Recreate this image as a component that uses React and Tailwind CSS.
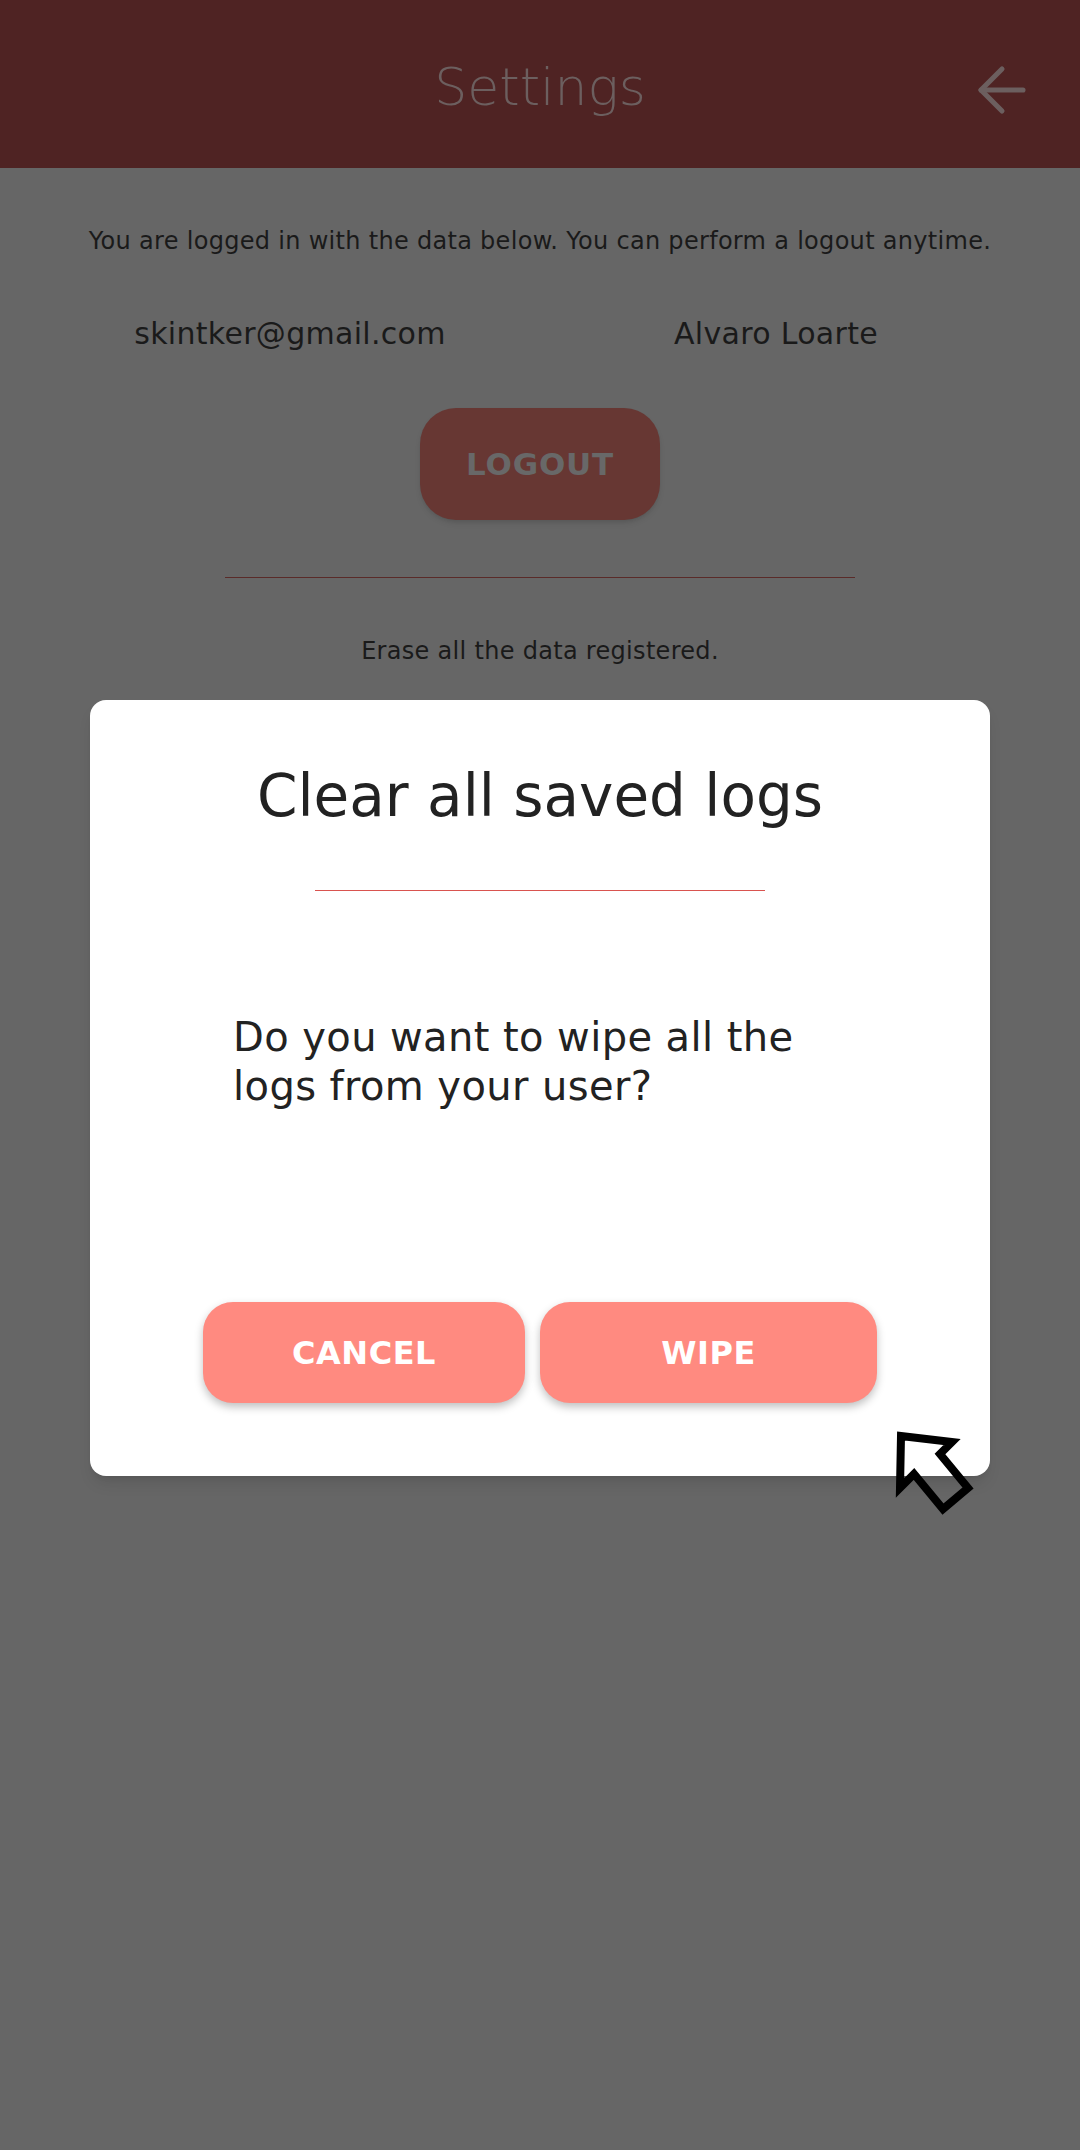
import React from 'react';
import { ArrowLeft } from 'lucide-react';

const font = { fontFamily: '"DejaVu Sans", "Noto Sans", sans-serif' };

const Cursor = () => (
  <svg className="absolute left-[880px] top-[1410px] w-[120px] h-[120px]" viewBox="0 0 120 120">
    <path d="M21 26 L72 32 L60 44 L88 78 L63 99 L34 64 L20 78 Z" fill="none" stroke="#000" strokeWidth="8" strokeLinejoin="miter" />
  </svg>
);

const App = () => {
  return (
    <div className="relative w-[1080px] h-[2150px] bg-[#666666] overflow-hidden" style={font}>
      <header className="h-[168px] bg-[#4f2323] grid grid-cols-[1fr_auto_1fr] items-center">
        <div />
        <h1 className="text-[52px] font-light text-[#6c5f5f] leading-none pt-[6px]">Settings</h1>
        <div className="flex justify-end pr-[42px] pt-[12px]">
          <ArrowLeft className="w-[72px] h-[72px] text-[#6c5f5f]" strokeWidth={1.7} />
        </div>
      </header>

      <main className="flex flex-col items-center">
        <p className="mt-[58px] text-[24px] leading-[30px] text-[#1a1a1a] tracking-[0.3px]">
          You are logged in with the data below. You can perform a logout anytime.
        </p>

        <div className="w-full grid grid-cols-2 pl-[47px] pr-[61px] mt-[60px] text-[30px] leading-[36px] text-[#1a1a1a] tracking-[0.3px]">
          <span className="text-center">skintker@gmail.com</span>
          <span className="text-center">Alvaro Loarte</span>
        </div>

        <button className="mt-[56px] w-[240px] h-[112px] rounded-[36px] bg-[#673733] text-[#686868] text-[31px] font-semibold tracking-[0.8px] shadow-md">
          LOGOUT
        </button>

        <div className="mt-[57px] w-[630px] h-px bg-[#5a2b29]" />

        <p className="mt-[58px] text-[24px] leading-[30px] text-[#1a1a1a] tracking-[0.3px]">Erase all the data registered.</p>
      </main>

      <div className="absolute left-[90px] top-[700px] w-[900px] h-[776px] bg-white rounded-2xl shadow-lg flex flex-col items-center">
        <h2 className="mt-[61px] text-[58px] leading-[70px] text-[#222222]">Clear all saved logs</h2>
        <div className="mt-[59px] w-[450px] h-px bg-[#d9534f]" />
        <p className="mt-[122px] self-stretch px-[143px] text-[40px] leading-[49px] text-[#222222] tracking-[0.4px]">
          Do you want to wipe all the logs from your user?
        </p>
        <div className="mt-auto mb-[73px] flex gap-[15px]">
          <button className="w-[322px] h-[101px] rounded-[30px] bg-[#ff8a80] text-white text-[32px] font-semibold tracking-[0.5px] shadow-[0_4px_8px_rgba(0,0,0,0.25)]">
            CANCEL
          </button>
          <button className="w-[337px] h-[101px] rounded-[30px] bg-[#ff8a80] text-white text-[32px] font-semibold tracking-[0.5px] shadow-[0_4px_8px_rgba(0,0,0,0.25)]">
            WIPE
          </button>
        </div>
      </div>

      <Cursor />
    </div>
  );
};

export default App;
